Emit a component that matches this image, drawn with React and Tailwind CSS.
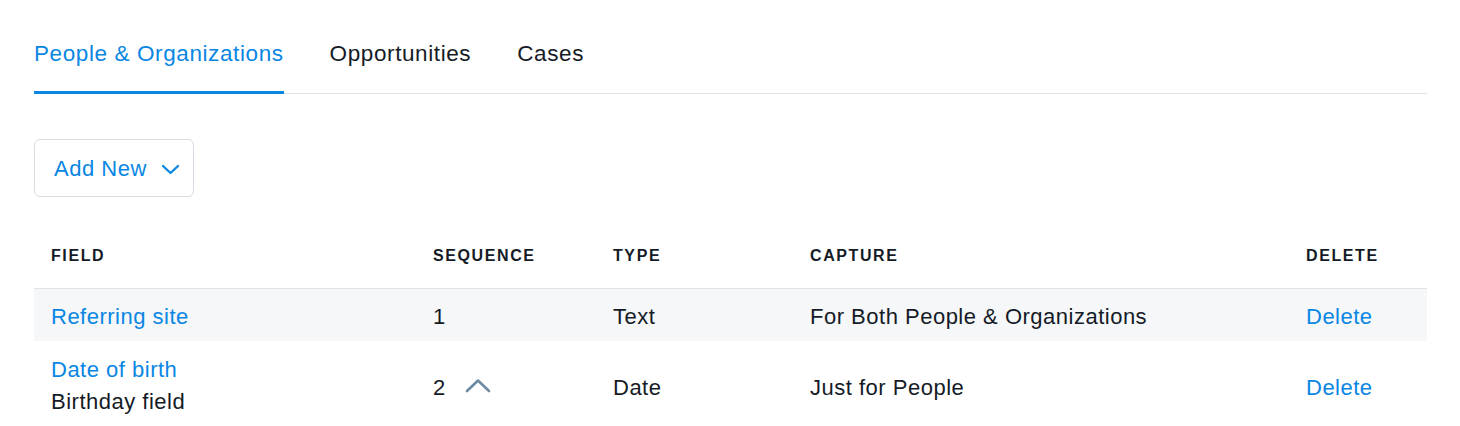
const tabs = [
  { label: "People & Organizations", active: true },
  { label: "Opportunities" },
  { label: "Cases" },
];

const rows = [
  { name: "Referring site", seq: "1", type: "Text", capture: "For Both People & Organizations", shaded: true },
  { name: "Date of birth", note: "Birthday field", seq: "2", up: true, type: "Date", capture: "Just for People" },
];

function ChevronUp() {
  return (
    <svg width="26" height="15" viewBox="0 0 26 15" fill="none" className="ml-[19px] mt-[-4px]">
      <path d="M2 13 L13 2.5 L24 13" stroke="#6f8aa3" strokeWidth="2.6" strokeLinecap="round" strokeLinejoin="round" />
    </svg>
  );
}

function ChevronDown() {
  return (
    <svg width="19" height="11" viewBox="0 0 19 11" fill="none" className="ml-[14px] mt-[2px]">
      <path d="M2 2 L9.5 9 L17 2" stroke="#0a86e3" strokeWidth="2.3" strokeLinecap="round" strokeLinejoin="round" />
    </svg>
  );
}

export default function App() {
  return (
    <div className="min-h-screen bg-white px-[34px] pt-[41px] text-[#151b26] font-['Liberation_Sans',Arial,sans-serif]">
      {/* tabs */}
      <div className="flex gap-[46px] border-b border-[#dfe3e8] w-[1393px]">
        {tabs.map((t) => (
          <div
            key={t.label}
            className={`text-[22.5px] tracking-[0.6px] leading-[26px] pb-[24px] -mb-px border-b-[3px] ${
              t.active ? "text-[#0a86e3] border-[#0a86e3]" : "border-transparent"
            }`}
          >
            {t.label}
          </div>
        ))}
      </div>

      {/* add new */}
      <button className="mt-[45px] h-[58px] w-[160px] flex items-center pl-[19px] border border-[#d5dbe3] rounded-[6px] text-[#0a86e3] text-[22px] tracking-[0.5px]">
        Add New
        <ChevronDown />
      </button>

      {/* table */}
      <table className="mt-[40px] w-[1393px] table-fixed border-collapse">
        <colgroup>
          <col className="w-[382px]" />
          <col className="w-[180px]" />
          <col className="w-[197px]" />
          <col className="w-[496px]" />
          <col className="w-[138px]" />
        </colgroup>
        <thead>
          <tr className="border-b border-[#dfe3e8]">
            {["Field", "Sequence", "Type", "Capture", "Delete"].map((h) => (
              <th key={h} className="text-left uppercase font-bold text-[16px] tracking-[1.6px] pl-[17px] h-[51px] pb-[15px] align-top pt-[7px]">
                {h}
              </th>
            ))}
          </tr>
        </thead>
        <tbody className="text-[22px] tracking-[0.5px]">
          {rows.map((r) => (
            <tr key={r.name} className={r.shaded ? "bg-[#f5f7f9]" : ""}>
              <td className={`pl-[17px] ${r.note ? "pt-[13px] pb-[11px]" : "h-[53px] pt-[4px]"}`}>
                <div className="text-[#0a86e3] leading-[31px]">{r.name}</div>
                {r.note && <div className="leading-[33px]">{r.note}</div>}
              </td>
              <td className={`pl-[17px] ${r.note ? "pt-[4px]" : "pt-[4px]"}`}>
                <div className="flex items-center">
                  {r.seq}
                  {r.up && <ChevronUp />}
                </div>
              </td>
              <td className="pl-[17px] pt-[4px]">{r.type}</td>
              <td className="pl-[17px] pt-[4px]">{r.capture}</td>
              <td className="pl-[17px] pt-[4px] text-[#0a86e3]">Delete</td>
            </tr>
          ))}
        </tbody>
      </table>
    </div>
  );
}
